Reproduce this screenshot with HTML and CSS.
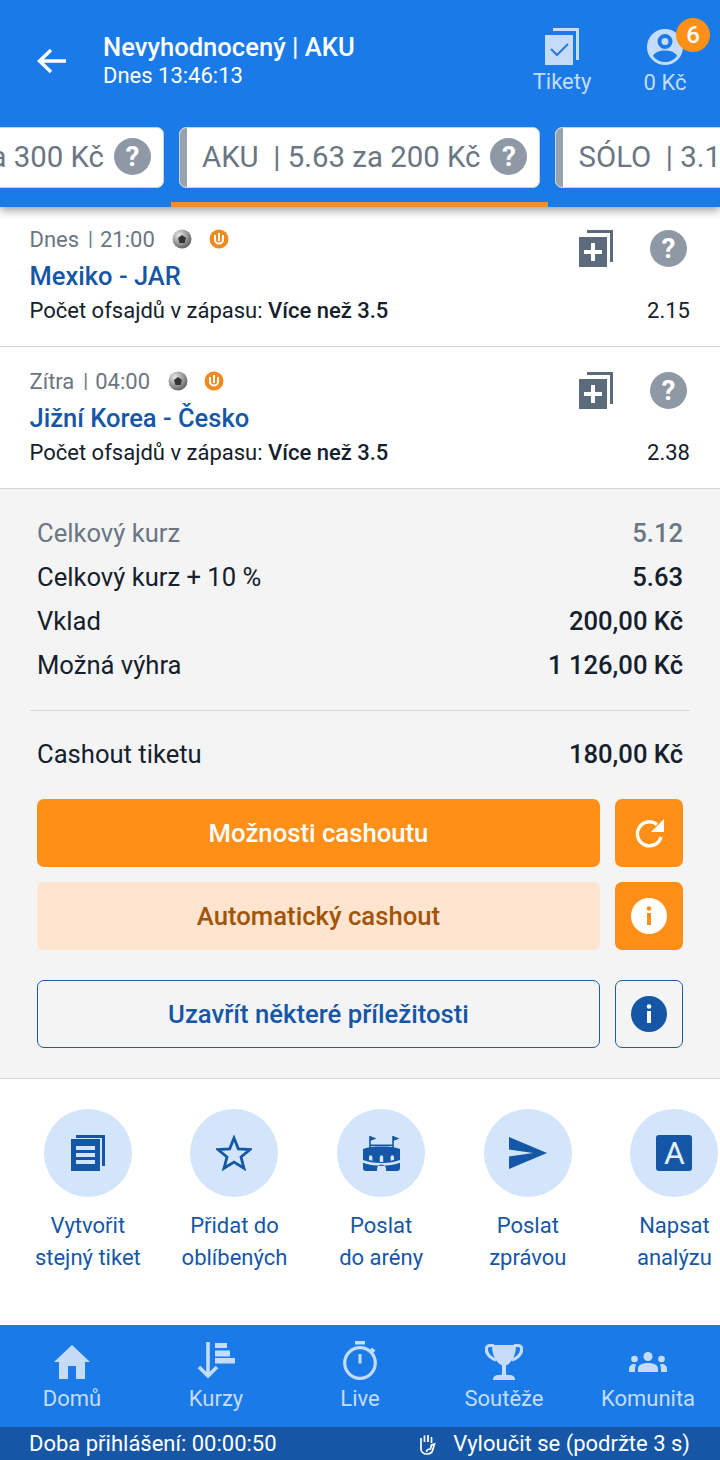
FILE: index.html
```html
<!DOCTYPE html>
<html lang="cs">
<head>
    <meta charset="UTF-8">
    <meta name="viewport" content="width=device-width, initial-scale=1.0">
    <title>Tiket AKU</title>
    <link rel="stylesheet" href="styles.css">
</head>
<body>
    <header class="top">
        <div class="top-bar">
            <svg class="back" viewBox="0 0 32 28"><path d="M30 14H4M15 3 3.500 14 15 25" fill="none" stroke="#fff" stroke-width="3.400"/></svg>
            <div class="top-title">
                <div class="top-name">Nevyhodnocený | AKU</div>
                <div class="top-date">Dnes 13:46:13</div>
            </div>
            <div class="top-action tikety">
                <svg class="tikety-icon" viewBox="0 0 34 37">
                    <path d="M8 0h26v32h-3V3H8z" fill="#c5dcf9"/>
                    <path d="M0 7h28v30H0z" fill="#c5dcf9"/>
                    <path d="M6 21l6 6 11-11" fill="none" stroke="#2c78d8" stroke-width="2"/>
                </svg>
                <span>Tikety</span>
            </div>
            <div class="top-action account">
                <svg class="account-icon" viewBox="0 0 36 36">
                    <circle cx="18" cy="18" r="18" fill="#c5dcf9"/>
                    <circle cx="18" cy="12.500" r="5.500" fill="none" stroke="#1a7ae8" stroke-width="4"/>
                    <path d="M6 27c2-4 7-5.500 12-5.500S28 23 30 27c-3 4-7.500 6-12 6s-9-2-12-6z" fill="#1a7ae8"/>
                </svg>
                <span class="badge">6</span>
                <span>0 Kč</span>
            </div>
        </div>
        <div class="tabs">
            <div class="tab first"><span class="tab-text">AKU | 2.50 za 300 Kč</span><span class="help">?</span></div>
            <div class="tab"><span class="tab-edge"></span><span class="tab-text">AKU&nbsp; | 5.63 za 200 Kč</span><span class="help">?</span></div>
            <div class="tab"><span class="tab-edge"></span><span class="tab-text">SÓLO&nbsp; | 3.15 za 100 Kč</span><span class="help">?</span></div>
        </div>
        <div class="tab-line"></div>
    </header>

    <section class="match">
        <div class="match-head">
            <div class="match-info">
                <div class="match-time">
                    <span>Dnes</span><span class="sep">|</span><span>21:00</span>
                    <svg class="ball" viewBox="0 0 20 20"><use href="#ball"/></svg>
                    <svg class="bonus" viewBox="0 0 20 20"><use href="#bonus"/></svg>
                </div>
                <div class="match-name">Mexiko - JAR</div>
            </div>
            <svg class="copy-add" viewBox="0 0 34 37"><use href="#copy-add"/></svg>
            <span class="help big">?</span>
        </div>
        <div class="match-bet">
            <span>Počet ofsajdů v zápasu: <b>Více než 3.5</b></span>
            <span>2.15</span>
        </div>
    </section>

    <section class="match">
        <div class="match-head">
            <div class="match-info">
                <div class="match-time">
                    <span>Zítra</span><span class="sep">|</span><span>04:00</span>
                    <svg class="ball" viewBox="0 0 20 20"><use href="#ball"/></svg>
                    <svg class="bonus" viewBox="0 0 20 20"><use href="#bonus"/></svg>
                </div>
                <div class="match-name">Jižní Korea - Česko</div>
            </div>
            <svg class="copy-add" viewBox="0 0 34 37"><use href="#copy-add"/></svg>
            <span class="help big">?</span>
        </div>
        <div class="match-bet">
            <span>Počet ofsajdů v zápasu: <b>Více než 3.5</b></span>
            <span>2.38</span>
        </div>
    </section>

    <section class="summary">
        <div class="sum-row muted"><span>Celkový kurz</span><span class="sum-val">5.12</span></div>
        <div class="sum-row"><span>Celkový kurz + 10 %</span><b>5.63</b></div>
        <div class="sum-row"><span>Vklad</span><b>200,00 Kč</b></div>
        <div class="sum-row"><span>Možná výhra</span><b>1 126,00 Kč</b></div>
        <div class="sum-line"></div>
        <div class="sum-row cashout"><span>Cashout tiketu</span><b>180,00 Kč</b></div>
        <div class="btn-row">
            <div class="btn orange">Možnosti cashoutu</div>
            <div class="btn-square orange">
                <svg viewBox="0 0 36 36" class="ico"><path d="M26 9.500A12 12 0 1 0 30 22" fill="none" stroke="#fff" stroke-width="3.400"/><path d="M33 4v13H20z" fill="#fff"/></svg>
            </div>
        </div>
        <div class="btn-row">
            <div class="btn peach">Automatický cashout</div>
            <div class="btn-square orange">
                <svg viewBox="0 0 36 36" class="ico"><circle cx="18" cy="18" r="18" fill="#fff"/><circle cx="18" cy="10.500" r="2.300" fill="#ff8f17"/><path d="M16 15h4v12h-4z" fill="#ff8f17"/></svg>
            </div>
        </div>
        <div class="btn-row outlined">
            <div class="btn outline">Uzavřít některé příležitosti</div>
            <div class="btn-square outline">
                <svg viewBox="0 0 36 36" class="ico"><circle cx="18" cy="18" r="18" fill="#1557a6"/><circle cx="18" cy="10.500" r="2.300" fill="#fff"/><path d="M16 15h4v12h-4z" fill="#fff"/></svg>
            </div>
        </div>
    </section>

    <section class="actions">
        <div class="action">
            <div class="circle"><svg viewBox="0 0 34 36" class="act-ico"><path d="M5 0h29v31h-3V3H5z" fill="#1557a6"/><path d="M0 4h29v32H0zM5 11v4h19v-4zM5 18v4h19v-4zM5 25v4h19v-4z" fill="#1557a6" fill-rule="evenodd"/></svg></div>
            <span>Vytvořit<br>stejný tiket</span>
        </div>
        <div class="action">
            <div class="circle"><svg viewBox="0 0 36 36" class="act-ico"><path d="M18 3l4.300 10.800 11.700.800-9 7.400 3 11.300L18 27.100 8 33.300l3-11.300-9-7.400 11.700-.8z" fill="none" stroke="#1557a6" stroke-width="2.800"/></svg></div>
            <span>Přidat do<br>oblíbených</span>
        </div>
        <div class="action">
            <div class="circle"><svg viewBox="0 0 39 35" class="act-ico arena"><path d="M8 0v12M31 0v12" stroke="#1557a6" stroke-width="1.600"/><path d="M8 0l6.500 2.500L8 5zM31 0l6.500 2.500L31 5z" fill="#1557a6"/><path d="M8 8.500h23v1.600H8z" fill="#1557a6"/><path d="M1 13c5-2 11-2.500 18.500-2.500S33 11 38 13v11c-5 2-11 3-18.500 3S6 26 1 24z" fill="#1557a6"/><path d="M7 24v-3a1.700 1.700 0 0 1 3.400 0v3.800zM17.800 26v-5a1.700 1.700 0 0 1 3.400 0v5zM28.600 24.800V21a1.700 1.700 0 0 1 3.400 0v3z" fill="#d3e5fa"/><path d="M1 26.800c5 2 11 3 18.500 3s13.500-1 18.500-3V32c0 2-1 3-3 3H24v-2a4.500 4.500 0 0 0-9 0v2H4c-2 0-3-1-3-3z" fill="#1557a6"/></svg></div>
            <span>Poslat<br>do arény</span>
        </div>
        <div class="action">
            <div class="circle"><svg viewBox="0 0 38 32" class="act-ico send"><path d="M0 0l38 16L0 32l0-12.500L24 16 0 12.500z" fill="#1557a6"/></svg></div>
            <span>Poslat<br>zprávou</span>
        </div>
        <div class="action">
            <div class="circle"><div class="a-box">A</div></div>
            <span>Napsat<br>analýzu</span>
        </div>
    </section>

    <nav class="nav">
        <div class="nav-item">
            <svg viewBox="0 0 36 34" class="nav-ico home"><path d="M18 0 36 17h-5v17H22V21h-8v13H5V17H0z" fill="#c5dcf9"/></svg>
            <span>Domů</span>
        </div>
        <div class="nav-item">
            <svg viewBox="0 0 38 38" class="nav-ico kurzy"><path d="M11 1v33M2 26l9 9 9-9" fill="none" stroke="#c5dcf9" stroke-width="3.600"/><path d="M18 2h12v5H18zM18 9.500h15v6H18zM18 17h20v5.500H18z" fill="#c5dcf9"/></svg>
            <span>Kurzy</span>
        </div>
        <div class="nav-item">
            <svg viewBox="0 0 36 40" class="nav-ico live"><path d="M13 1h10v3.500H13z" fill="#c5dcf9"/><circle cx="18" cy="23" r="15.300" fill="none" stroke="#c5dcf9" stroke-width="3.200"/><path d="M16.500 14h3v9.500h-3zM30 7.500l3.500 3-2.500 2.500-3-3z" fill="#c5dcf9"/></svg>
            <span>Live</span>
        </div>
        <div class="nav-item">
            <svg viewBox="0 0 38 38" class="nav-ico cup"><path d="M7 3h24c0 11-4.500 18-10 20.500V32c0 .6 1 1 3 1 4 0 6 1.500 6 5H8c0-3.500 2-5 6-5 2 0 3-.4 3-1v-8.500C11.500 21 7 14 7 3z" fill="#c5dcf9"/><path d="M9 3.500H5C1 3.500.500 8 2.500 11.500 4.500 15 8 17 11 18M29 3.500h4c4 0 4.500 4.500 2.500 8C33.500 15 30 17 27 18" fill="none" stroke="#c5dcf9" stroke-width="3.200"/></svg>
            <span>Soutěže</span>
        </div>
        <div class="nav-item">
            <svg viewBox="0 0 38 20" class="nav-ico people"><circle cx="19" cy="4.500" r="4.500" fill="#c5dcf9"/><circle cx="5.500" cy="7" r="3.300" fill="#c5dcf9"/><circle cx="32.500" cy="7" r="3.300" fill="#c5dcf9"/><path d="M9 20v-3c0-4 4-6 10-6s10 2 10 6v3zM0 20v-3c0-3 2-5 6-5l1 1c-1 1-1 3-1 7zM38 20v-3c0-3-2-5-6-5l-1 1c1 1 1 3 1 7z" fill="#c5dcf9"/></svg>
            <span>Komunita</span>
        </div>
    </nav>

    <footer class="status">
        <span>Doba přihlášení: 00:00:50</span>
        <svg viewBox="0 0 18 22" class="hand"><path d="M3 12V5M6.500 9V2.500M10 9V2M13.500 10V4M3 11v5c0 3 2.500 5 6 5s5.500-2 6-5l1.500-5-3 1-1 4c-2 0-4 1-4 3" fill="none" stroke="#fff" stroke-width="1.700"/></svg>
        <span>Vyloučit se (podržte 3 s)</span>
    </footer>

    <svg class="defs" width="0" height="0">
        <defs>
            <radialGradient id="ball-fill" cx="35%" cy="30%" r="80%"><stop offset="0" stop-color="#e8e8e8"/><stop offset="1" stop-color="#555"/></radialGradient>
            <g id="ball"><circle cx="10" cy="10" r="9.500" fill="url(#ball-fill)"/><path d="M10 6l4 3-1.500 5h-5L6 9z" fill="#333"/></g>
            <g id="bonus"><circle cx="10" cy="10" r="9.500" fill="#f08a1d"/><path d="M6 6v5c0 2 2 3.500 4 3.500s4-1.500 4-3.500V6" fill="none" stroke="#fff" stroke-width="2"/><path d="M10 4v8" stroke="#fff" stroke-width="2"/></g>
            <g id="copy-add"><path d="M8 0h26v32h-3V3H8z" fill="#5b6b7b"/><path d="M0 7h28v30H0z" fill="#5b6b7b"/><path d="M12 13h4v7h7v4h-7v7h-4v-7H5v-4h7z" fill="#fff"/></g>
        </defs>
    </svg>
</body>
</html>
```

FILE: styles.css
```css
* {
    box-sizing: border-box;
}

html, body {
    margin: 0;
    padding: 0;
}

body {
    width: 720px;
    height: 1460px;
    overflow: hidden;
    font-family: Roboto, sans-serif;
    color: #14202c;
    background: #fff;
    display: flex;
    flex-direction: column;
}

/* header */
.top {
    height: 207px;
    flex: none;
    background: #1a7ae8;
    box-shadow: 0 4px 8px rgba(0, 0, 0, 0.35);
    position: relative;
    z-index: 1;
    overflow: hidden;
}

.top-bar {
    height: 127px;
    display: flex;
    align-items: flex-start;
    padding: 30px 0 0 36px;
    color: #fff;
}

.back {
    width: 32px;
    height: 28px;
    margin-top: 17px;
    flex: none;
}

.top-title {
    width: 430px;
    margin-left: 35px;
}

.top-name {
    font-size: 25.600px;
    font-weight: 500;
    line-height: 34px;
}

.top-date {
    font-size: 22px;
    line-height: 24px;
}

.top-action {
    position: relative;
    display: flex;
    flex-direction: column;
    align-items: center;
    font-size: 22px;
    color: #c5dcf9;
}

.tikety {
    width: 60px;
    margin-left: -1px;
}

.tikety-icon {
    width: 34px;
    height: 37px;
    margin-bottom: 4px;
    margin-top: -2px;
}

.account {
    width: 60px;
    margin-left: 43px;
}

.account-icon {
    width: 36px;
    height: 36px;
    margin-bottom: 5px;
    margin-top: -1px;
}

.badge {
    position: absolute;
    top: -12px;
    right: -15px;
    width: 34px;
    height: 34px;
    border-radius: 50%;
    background: #ff8f17;
    color: #fff;
    font-size: 24px;
    font-weight: 500;
    line-height: 34px;
    text-align: center;
}

.tabs {
    display: flex;
    gap: 15px;
    height: 61px;
    overflow: hidden;
}

.tab {
    flex: none;
    height: 61px;
    background: #fff;
    border: 1px solid #c9d3de;
    border-radius: 7px;
    display: flex;
    align-items: center;
    padding: 0 12px 2px 22px;
    position: relative;
    overflow: hidden;
    font-size: 29.400px;
    color: #6a7683;
    white-space: nowrap;
}

.tab.first {
    width: 300px;
    margin-left: -136px;
    justify-content: flex-end;
}

.tab-edge {
    position: absolute;
    left: 0;
    top: 0;
    bottom: 0;
    width: 7px;
    background: #98a3ae;
}

.help {
    flex: none;
    width: 37px;
    height: 37px;
    margin-left: 10px;
    border-radius: 50%;
    background: #8e99a5;
    color: #fff;
    font-size: 28px;
    font-weight: 700;
    line-height: 37px;
    text-align: center;
}

.tab-line {
    width: 377px;
    height: 5px;
    margin: 14px 0 0 171px;
    background: #f08f2c;
}

/* matches */
.match {
    flex: none;
    padding: 16px 30px 0 29.500px;
    border-bottom: 1px solid #d4d6d9;
}

.match:first-of-type {
    height: 140px;
    padding-top: 16px;
}

.match + .match {
    height: 142px;
    padding-top: 18px;
}

.match-head {
    display: flex;
    align-items: flex-start;
    height: 72px;
}

.match-info {
    flex: 1;
}

.match-time {
    display: flex;
    align-items: center;
    height: 32px;
    font-size: 22px;
    color: #6a7683;
}

.sep {
    margin: 0 7px 0 9px;
    font-size: 20px;
}

.ball, .bonus {
    width: 20px;
    height: 20px;
    flex: none;
}

.ball {
    margin-left: 17.500px;
}

.bonus {
    margin-left: 16.500px;
}

.match-name {
    font-size: 25.500px;
    font-weight: 500;
    line-height: 40px;
    color: #1557a6;
    margin-top: 1px;
}

.copy-add {
    width: 34px;
    height: 37px;
    margin: 7px 37px 0 0;
    flex: none;
}

.help.big {
    margin: 7px 3px 0 0;
}

.match-bet {
    display: flex;
    justify-content: space-between;
    align-items: center;
    font-size: 22px;
    line-height: 32px;
    color: #14202c;
}

.match-bet b {
    font-weight: 500;
}

/* summary */
.summary {
    flex: none;
    height: 590px;
    background: #f4f4f5;
    padding: 22px 30px 0;
    border-bottom: 1px solid #d4d6d9;
}

.sum-row {
    display: flex;
    justify-content: space-between;
    align-items: center;
    height: 44px;
    padding: 0 7px;
    font-size: 25.600px;
}

.sum-row b {
    font-weight: 500;
}

.sum-val {
    font-weight: 500;
}

.muted {
    color: #6a7683;
}

.sum-line {
    height: 1px;
    background: #d4d6d9;
    margin: 23px 0 21px;
}

.cashout {
    margin-bottom: 23px;
}

.btn-row {
    display: flex;
    gap: 15px;
    padding: 0 7px;
    margin-bottom: 15px;
}

.btn-row.outlined {
    margin-top: 30px;
}

.btn {
    flex: 1;
    height: 68px;
    border-radius: 7px;
    font-size: 25.700px;
    font-weight: 500;
    display: flex;
    align-items: center;
    justify-content: center;
}

.btn-square {
    flex: none;
    width: 68px;
    height: 68px;
    border-radius: 7px;
    display: flex;
    align-items: center;
    justify-content: center;
}

.orange {
    background: #ff8f17;
    color: #fff;
}

.peach {
    background: #ffe4cf;
    color: #a25408;
}

.outline {
    border: 1.500px solid #1e5d9f;
    color: #1557a6;
}

.ico {
    width: 36px;
    height: 36px;
}

/* action circles */
.actions {
    flex: none;
    height: 246px;
    display: flex;
    padding: 30px 0 0 14.500px;
    overflow: hidden;
}

.action {
    flex: 0 0 146.670px;
    display: flex;
    flex-direction: column;
    align-items: center;
    text-align: center;
    font-size: 22px;
    line-height: 32px;
    color: #1557a6;
}

.circle {
    width: 88px;
    height: 88px;
    border-radius: 50%;
    background: #d3e5fa;
    margin-bottom: 13px;
    display: flex;
    align-items: center;
    justify-content: center;
}

.act-ico {
    width: 36px;
    height: 36px;
}

.act-ico.arena {
    width: 39px;
    height: 35px;
}

.act-ico.send {
    width: 38px;
    height: 32px;
}

.a-box {
    width: 36px;
    height: 36px;
    border-radius: 3px;
    background: #1557a6;
    color: #e3eefc;
    font-size: 32px;
    line-height: 36px;
    text-align: center;
}

/* bottom nav */
.nav {
    flex: none;
    height: 102px;
    background: #1a7ae8;
    display: flex;
}

.nav-item {
    flex: 1;
    position: relative;
    padding-top: 61px;
    text-align: center;
    font-size: 22px;
    line-height: 26px;
    color: #c5dcf9;
}

.nav-ico {
    position: absolute;
    left: 50%;
    transform: translateX(-50%);
}

.home {
    top: 20px;
    width: 36px;
    height: 34px;
}

.kurzy {
    top: 16px;
    width: 38px;
    height: 38px;
}

.live {
    top: 15px;
    width: 36px;
    height: 40px;
}

.cup {
    top: 17px;
    width: 38px;
    height: 38px;
}

.people {
    top: 27px;
    width: 38px;
    height: 20px;
}

.status {
    flex: none;
    height: 33px;
    background: #1557a6;
    color: #fff;
    font-size: 22px;
    display: flex;
    align-items: center;
    padding: 0 30px 0 29px;
}

.hand {
    width: 18px;
    height: 22px;
    margin-left: auto;
    margin-right: 17px;
}

.defs {
    position: absolute;
}
```
